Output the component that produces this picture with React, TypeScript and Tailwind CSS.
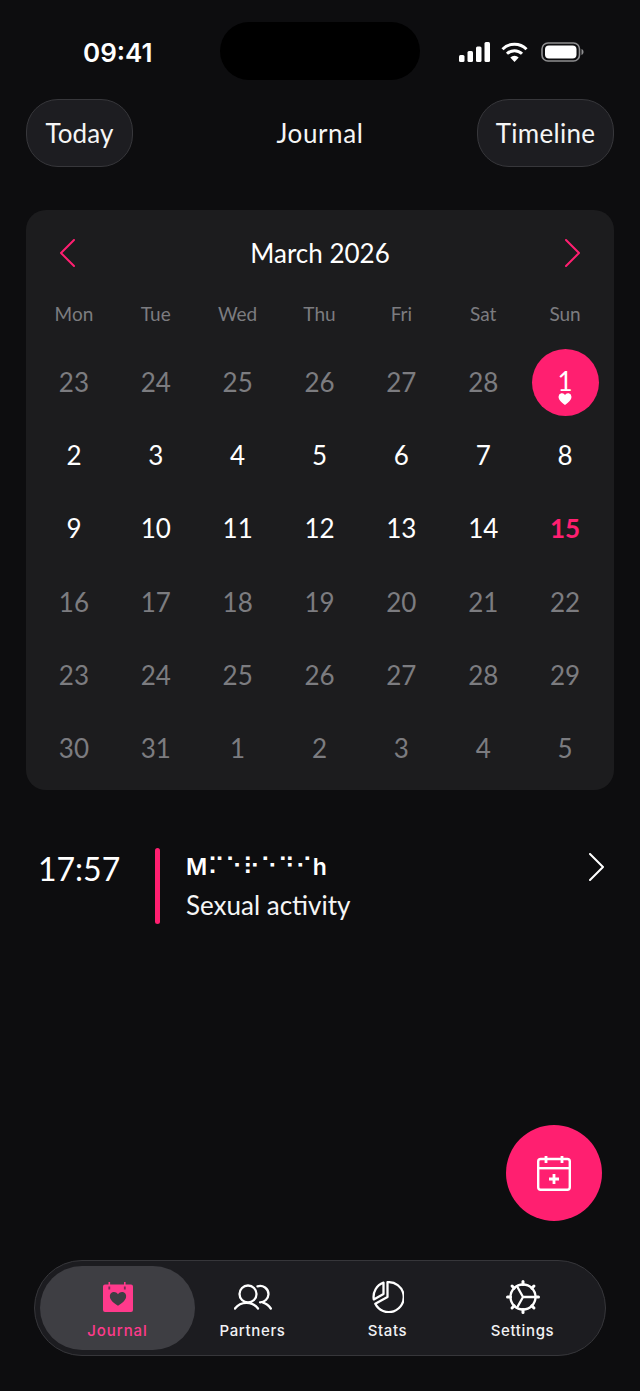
const weekdays = ['Mon', 'Tue', 'Wed', 'Thu', 'Fri', 'Sat', 'Sun'];

type Day = { label: number; muted?: boolean; today?: boolean; marked?: boolean };

const muted = (labels: number[]): Day[] => labels.map((label) => ({ label, muted: true }));
const plain = (labels: number[]): Day[] => labels.map((label) => ({ label }));

const days: Day[] = [
  ...muted([23, 24, 25, 26, 27, 28]),
  { label: 1, marked: true },
  ...plain([2, 3, 4, 5, 6, 7, 8, 9, 10, 11, 12, 13, 14]),
  { label: 15, today: true },
  ...muted([16, 17, 18, 19, 20, 21, 22, 23, 24, 25, 26, 27, 28, 29, 30, 31, 1, 2, 3, 4, 5]),
];

function StatusIcons() {
  return (
    <div className="flex items-center">
      <svg width="31" height="20" viewBox="0 0 31 20" fill="white">
        <rect x="0" y="13" width="5.500" height="7" rx="1.500" />
        <rect x="8.500" y="9" width="5.500" height="11" rx="1.500" />
        <rect x="17" y="4.500" width="5.500" height="15.500" rx="1.500" />
        <rect x="25.500" y="0" width="5.500" height="20" rx="1.500" />
      </svg>
      <svg width="27" height="20" viewBox="0 0 27 20" fill="none" stroke="white" strokeWidth="3" className="ml-[11px]">
        <path d="M1.500 7.200a17 17 0 0 1 24 0" />
        <path d="M6 11.700a10.700 10.700 0 0 1 15 0" />
        <path d="M13.500 20l-4.200-4.500a6 6 0 0 1 8.400 0z" fill="white" stroke="none" />
      </svg>
      <svg width="43" height="20" viewBox="0 0 43 20" fill="none" className="ml-[13px]">
        <rect x="1" y="1" width="37.500" height="18" rx="6" stroke="#8e8e90" strokeWidth="1.600" />
        <rect x="4" y="3.500" width="31.500" height="13" rx="4" fill="white" />
        <path d="M40.500 7c1.300.4 2 1.600 2 3s-.7 2.600-2 3z" fill="#8e8e90" />
      </svg>
    </div>
  );
}

function JournalIcon() {
  return (
    <svg width="30" height="30" viewBox="0 0 30 30">
      <path
        fill="#ff3a8c"
        fillRule="evenodd"
        d="M5.500 0h1.600v2.500H21V0h1.600v2.500H28a2 2 0 0 1 2 2V28a2 2 0 0 1-2 2H2a2 2 0 0 1-2-2V4.500a2 2 0 0 1 2-2h3.500zM15 12.200c-1.300-1.800-3.200-2.600-5-2.100-2.200.6-3.400 2.600-3.100 4.800.4 3.100 4 6.300 8.100 8.800 4.100-2.500 7.700-5.700 8.100-8.800.3-2.200-.9-4.200-3.100-4.800-1.800-.5-3.700.3-5 2.100z"
      />
      <rect x="5.400" y="4.500" width="1.800" height="3" fill="#7a2b52" />
      <rect x="20.900" y="4.500" width="1.800" height="3" fill="#7a2b52" />
    </svg>
  );
}

function PartnersIcon() {
  return (
    <svg width="38" height="26" viewBox="0 0 38 26" fill="none" stroke="white" strokeWidth="2.300" strokeLinecap="round">
      <circle cx="14" cy="10" r="8.500" />
      <path d="M1 24.500C4 20.500 8.500 18.800 12.500 18.800S21 20.500 24 24.500" />
      <path d="M23.500 2.300a8.400 8.400 0 0 1 11 8 8.400 8.400 0 0 1-8.500 8" />
      <path d="M29 18.600c3 .8 5.800 2.900 7.800 5.900" />
    </svg>
  );
}

function StatsIcon() {
  return (
    <svg width="32" height="32" viewBox="0 0 32 32" fill="none" stroke="white" strokeWidth="2.300" strokeLinejoin="round">
      <path d="M15.500 1.200A15 15 0 1 1 3.300 22.800l12.200-6.800z" />
      <path d="M11.500 1.700v11.200l-9.700 5.500A15 15 0 0 1 11.500 1.700z" />
    </svg>
  );
}

function SettingsIcon() {
  const angles = [0, 45, 90, 135, 180, 225, 270, 315];
  return (
    <svg width="34" height="34" viewBox="0 0 34 34" fill="none" stroke="white" strokeWidth="2.300" strokeLinecap="round">
      <circle cx="17" cy="17" r="12.500" />
      {angles.map((a) => (
        <path key={a} d="M17 1.500V4.500" transform={`rotate(${a} 17 17)`} strokeWidth="3" />
      ))}
      <path d="M17 17h12.500M17 17l-6-10.800M17 17l-6 10.800" />
    </svg>
  );
}

function AddEventIcon() {
  return (
    <svg width="34" height="36" viewBox="0 0 34 36" fill="none" stroke="white" strokeWidth="2.400" strokeLinejoin="round">
      <rect x="1.200" y="4" width="31.600" height="30.800" rx="2.500" />
      <path d="M1.200 13.200h31.600" />
      <path d="M9 1v7M25 1v7" strokeWidth="2.800" />
      <path d="M17 19v10M12 24h10" strokeWidth="2.800" />
    </svg>
  );
}

function Chevron({ dir, className }: { dir: 'left' | 'right'; className: string }) {
  return (
    <svg width="16" height="28" viewBox="0 0 16 28" fill="none" stroke="currentColor" strokeWidth="2" strokeLinecap="round" strokeLinejoin="round" className={className}>
      <path d={dir === 'left' ? 'M15 1L2 14l13 13' : 'M1 1l13 13L1 27'} />
    </svg>
  );
}

function Tab({ label, active, children }: { label: string; active?: boolean; children: React.ReactNode }) {
  return (
    <div
      className={
        active
          ? '-mx-[10px] flex flex-col items-center justify-end rounded-[42px] bg-[#3e3e43] pb-[9px]'
          : 'flex flex-col items-center justify-end pb-[9px]'
      }
    >
      <div className="flex h-[36px] items-center justify-center">{children}</div>
      <span
        className={
          active
            ? 'mt-[6px] text-[15px] leading-[20px] font-medium tracking-[0.9px] text-[#ff3a8c]'
            : 'mt-[6px] text-[15px] leading-[20px] font-medium tracking-[0.65px] text-[#f2f2f4]'
        }
      >
        {label}
      </span>
    </div>
  );
}

export default function App() {
  return (
    <div className="relative flex h-[1391px] w-[640px] flex-col overflow-hidden bg-[#0d0d0f] font-['Lato',sans-serif] text-white">
      {/* status bar */}
      <div className="grid grid-cols-[1fr_200px_1fr] items-center pt-[22px]">
        <span className="mt-[2px] pl-[83px] font-['Inter',sans-serif] text-[26px] font-semibold">09:41</span>
        <div className="h-[58px] rounded-[29px] bg-black" />
        <div className="mt-[2px] flex justify-end pr-[56px]">
          <StatusIcons />
        </div>
      </div>

      {/* header */}
      <div className="mt-[19px] grid grid-cols-[1fr_auto_1fr] items-center px-[26px]">
        <button className="flex h-[68px] w-[107px] items-center justify-center rounded-[32px] border border-[#37373b] bg-[#1d1d21] text-[26px] tracking-[0.1px] text-[#f5f5f5]">
          Today
        </button>
        <span className="text-[26px] tracking-[0.6px] text-[#f5f5f5]">Journal</span>
        <button className="flex h-[68px] w-[137px] items-center justify-center justify-self-end rounded-[32px] border border-[#37373b] bg-[#1d1d21] text-[26px] tracking-[0.3px] text-[#f5f5f5]">
          Timeline
        </button>
      </div>

      {/* calendar */}
      <div className="mx-[26px] mt-[43px] h-[580px] rounded-[20px] bg-[#1c1c1e] pr-[8px] pl-[7px]">
        <div className="flex h-[86px] items-center justify-between pr-[25px] pl-[26px]">
          <Chevron dir="left" className="mb-[1px] text-[#ff1f70]" />
          <span className="text-[26px]">March 2026</span>
          <Chevron dir="right" className="mb-[1px] text-[#ff1f70]" />
        </div>
        <div className="grid grid-cols-7 text-center text-[19px] leading-[35px] text-[#7c7c80]">
          {weekdays.map((d) => (
            <span key={d}>{d}</span>
          ))}
        </div>
        <div className="mt-[15px] grid auto-rows-[73.200px] grid-cols-7">
          {days.map((d, i) => (
            <div key={i} className="flex items-center justify-center text-[26px]">
              {d.marked ? (
                <div className="relative flex h-[67px] w-[67px] items-center justify-center rounded-full bg-[#ff1f70] pb-[2px]">
                  1
                  <svg width="14" height="12" viewBox="0 0 14 13" fill="white" className="absolute top-[44px] left-[26.500px]">
                    <path d="M7 13C3 10 0 7.500 0 4a3.700 3.700 0 0 1 7-1.700A3.700 3.700 0 0 1 14 4c0 3.500-3 6-7 9z" />
                  </svg>
                </div>
              ) : d.today ? (
                <span className="font-bold text-[#ff1f70]">{d.label}</span>
              ) : d.muted ? (
                <span className="text-[#7c7c80]">{d.label}</span>
              ) : (
                <span>{d.label}</span>
              )}
            </div>
          ))}
        </div>
      </div>

      {/* event */}
      <div className="mt-[58px] flex items-start pl-[38px]">
        <span className="mt-[1px] w-[117px] text-[32px] leading-[40px]">17:57</span>
        <div className="h-[76px] w-[5px] rounded-full bg-[#ff1f70]" />
        <div className="ml-[26px] flex-1">
          <div className="mt-[1px] h-[36px] font-['Inter',sans-serif] text-[23px] leading-[36px] font-semibold">
            M<span className="font-['DejaVu_Sans',sans-serif] text-[24px] font-normal">⠍⠑⠗⠑⠙⠊</span>h
          </div>
          <div className="mt-[2px] text-[26px] leading-[36px] text-[#f5f5f5]">Sexual activity</div>
        </div>
        <Chevron dir="right" className="mt-[5px] mr-[35px] text-white" />
      </div>

      {/* add button */}
      <button className="absolute top-[1125px] left-[506px] flex h-[96px] w-[96px] items-center justify-center rounded-full bg-[#ff1f70]">
        <AddEventIcon />
      </button>

      {/* tab bar */}
      <div className="mt-auto mb-[35px] ml-[34px] grid h-[96px] w-[572px] grid-cols-4 rounded-[48px] border border-[#36363a] bg-[#1c1c20] px-[15px] py-[5px] font-['Inter',sans-serif]">
        <Tab label="Journal" active>
          <JournalIcon />
        </Tab>
        <Tab label="Partners">
          <PartnersIcon />
        </Tab>
        <Tab label="Stats">
          <StatsIcon />
        </Tab>
        <Tab label="Settings">
          <SettingsIcon />
        </Tab>
      </div>
    </div>
  );
}
